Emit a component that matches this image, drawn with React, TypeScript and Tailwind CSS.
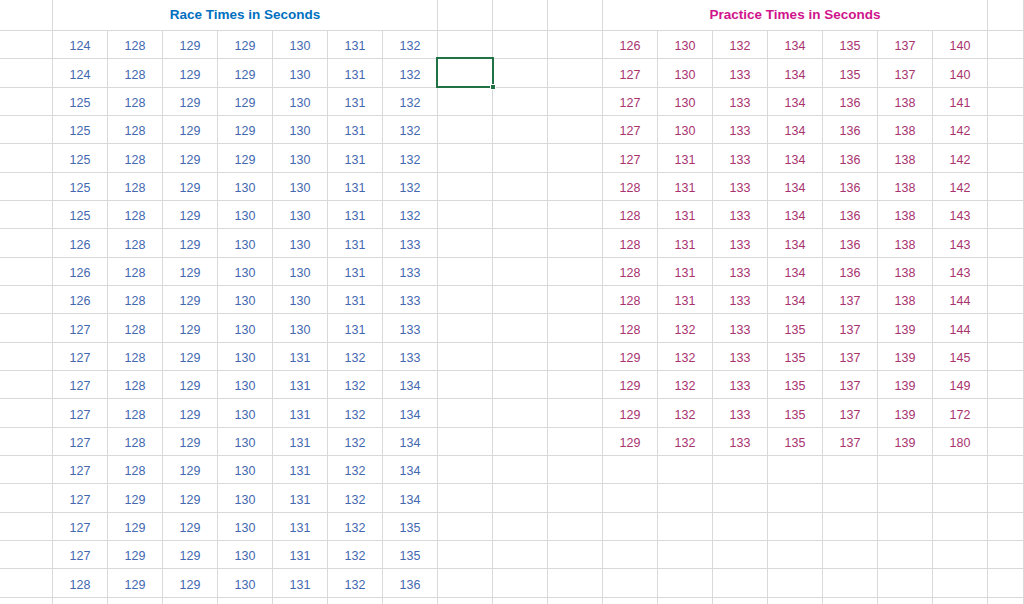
import React from "react";

const race: number[][] = [
  [124, 128, 129, 129, 130, 131, 132],
  [124, 128, 129, 129, 130, 131, 132],
  [125, 128, 129, 129, 130, 131, 132],
  [125, 128, 129, 129, 130, 131, 132],
  [125, 128, 129, 129, 130, 131, 132],
  [125, 128, 129, 130, 130, 131, 132],
  [125, 128, 129, 130, 130, 131, 132],
  [126, 128, 129, 130, 130, 131, 133],
  [126, 128, 129, 130, 130, 131, 133],
  [126, 128, 129, 130, 130, 131, 133],
  [127, 128, 129, 130, 130, 131, 133],
  [127, 128, 129, 130, 131, 132, 133],
  [127, 128, 129, 130, 131, 132, 134],
  [127, 128, 129, 130, 131, 132, 134],
  [127, 128, 129, 130, 131, 132, 134],
  [127, 128, 129, 130, 131, 132, 134],
  [127, 129, 129, 130, 131, 132, 134],
  [127, 129, 129, 130, 131, 132, 135],
  [127, 129, 129, 130, 131, 132, 135],
  [128, 129, 129, 130, 131, 132, 136],
];

const practice: number[][] = [
  [126, 130, 132, 134, 135, 137, 140],
  [127, 130, 133, 134, 135, 137, 140],
  [127, 130, 133, 134, 136, 138, 141],
  [127, 130, 133, 134, 136, 138, 142],
  [127, 131, 133, 134, 136, 138, 142],
  [128, 131, 133, 134, 136, 138, 142],
  [128, 131, 133, 134, 136, 138, 143],
  [128, 131, 133, 134, 136, 138, 143],
  [128, 131, 133, 134, 136, 138, 143],
  [128, 131, 133, 134, 137, 138, 144],
  [128, 132, 133, 135, 137, 139, 144],
  [129, 132, 133, 135, 137, 139, 145],
  [129, 132, 133, 135, 137, 139, 149],
  [129, 132, 133, 135, 137, 139, 172],
  [129, 132, 133, 135, 137, 139, 180],
];

const cell =
  "border-r border-b border-[#d9d9d9] flex items-center justify-center";

export default function App() {
  const rows = Array.from({ length: 21 }, (_, i) => i);
  return (
    <div
      className="w-[1024px] h-[604px] overflow-hidden bg-white"
      style={{ fontFamily: '"Liberation Sans", Arial, sans-serif' }}
    >
      <div className="grid grid-cols-[53px_repeat(17,55px)_1fr] grid-rows-[31px_repeat(7,28px_29px_28px)]">
        {/* header row */}
        <div className={cell} />
        <div className={`${cell} col-span-7 text-[13.5px] font-bold text-[#0070c0]`}>
          Race Times in Seconds
        </div>
        <div className={cell} />
        <div className={cell} />
        <div className={cell} />
        <div className={`${cell} col-span-7 text-[13.5px] font-bold text-[#d0148c]`}>
          Practice Times in Seconds
        </div>
        <div className={cell} />

        {rows.map((r) => (
          <React.Fragment key={r}>
            <div className={cell} />
            {Array.from({ length: 7 }, (_, c) => (
              <div key={`r${c}`} className={`${cell} pt-[4px] text-[12.5px] text-[#4468b0]`}>
                {race[r] ? race[r][c] : ""}
              </div>
            ))}
            {Array.from({ length: 3 }, (_, c) => (
              <div key={`g${c}`} className={`${cell} relative`}>
                {r === 1 && c === 0 && (
                  <div className="absolute left-[-2px] top-[-2px] w-[58px] h-[31px] border-2 border-[#217346] z-10">
                    <div className="absolute right-[-4px] bottom-[-4px] w-[6px] h-[6px] bg-[#217346] border border-white" />
                  </div>
                )}
              </div>
            ))}
            {Array.from({ length: 7 }, (_, c) => (
              <div key={`p${c}`} className={`${cell} pt-[4px] text-[12.5px] text-[#a8336f]`}>
                {practice[r] ? practice[r][c] : ""}
              </div>
            ))}
            <div className={cell} />
          </React.Fragment>
        ))}
      </div>
    </div>
  );
}
